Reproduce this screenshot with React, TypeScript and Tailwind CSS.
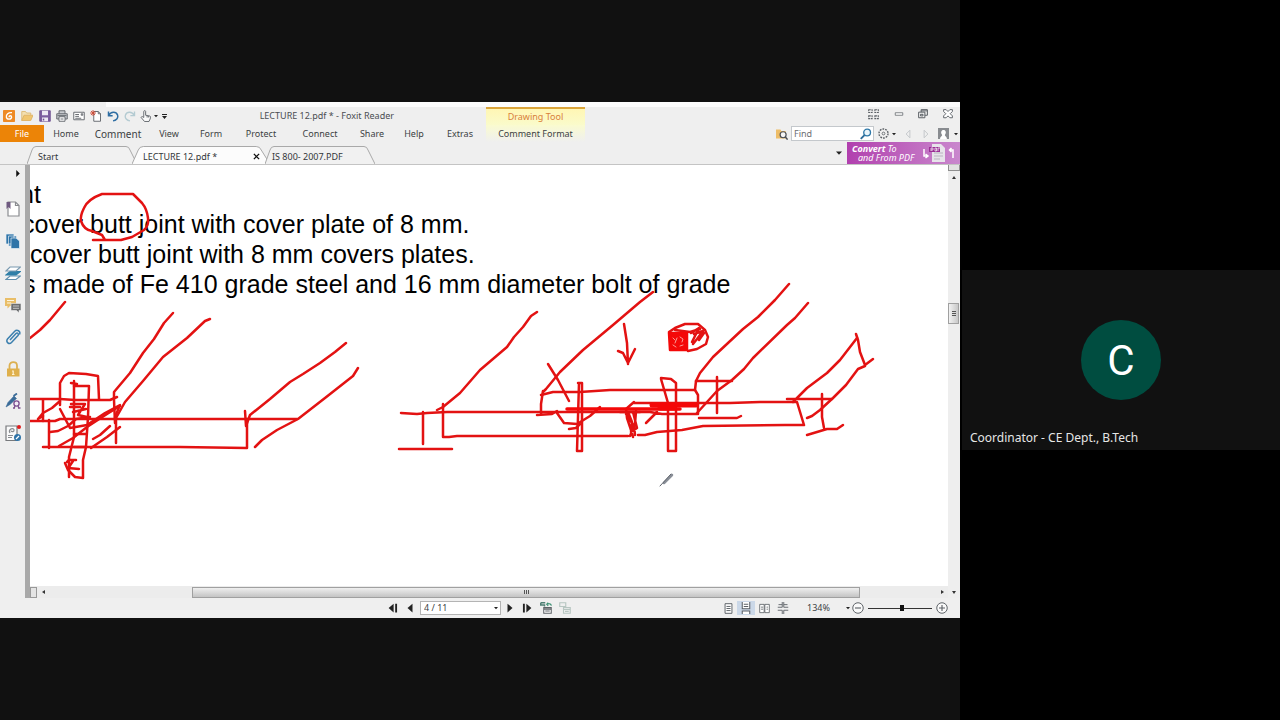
import type { ReactNode } from 'react'

const menus = [
  { label: 'Home', width: 'w-[44px]' },
  { label: 'Comment', width: 'w-[60px]', big: true },
  { label: 'View', width: 'w-[42px]' },
  { label: 'Form', width: 'w-[42px]' },
  { label: 'Protect', width: 'w-[58px]' },
  { label: 'Connect', width: 'w-[60px]' },
  { label: 'Share', width: 'w-[44px]' },
  { label: 'Help', width: 'w-[40px]' },
  { label: 'Extras', width: 'w-[52px]' },
]

// The page is scrolled sideways, so most lines start left of the viewport
const lines = [
  { text: 'nt', indent: '-ml-[10px]' },
  { text: 'cover butt joint with cover plate of 8 mm.', indent: '-ml-[8px]' },
  { text: 'cover butt joint with 8 mm covers plates.', indent: 'ml-0' },
  { text: 's made of Fe 410 grade steel and 16 mm diameter bolt of grade', indent: '-ml-[7px]' },
]

const strokes = [
  // circle round "butt"
  'M93 240H121L132 237L144 230Q149 226 148 218Q147 209 142 203L133 194H102Q88 199 84 208Q80 216 81 221Q84 230 92 231L102 235L105 240',
  // left joint
  'M30 338L40 330L50 320L65 302',
  'M173 313L164 323L154 339L143 353L130 373L114 392V400L115 423',
  'M210 319L205 321L187 338L163 357L143 381L125 402L116 418',
  'M346 343L335 352L320 363L303 374L290 382L270 399L250 415L246 426L245 411',
  'M358 368L353 376L325 398L298 419L277 430L262 440L255 447',
  'M30 399H60L75 400H110L117 397',
  'M30 421L55 421L60 419H297',
  'M43 447H180L247 448V419',
  'M49 420V448M43 400V421M116 418V443',
  'M60 405V383L64 376L69 373L86 374L98 376L99 399',
  'M71 383L77 384M74 381V437L69 457V477',
  'M74 386H89L88 417L86 447L83 460V478L75 477L68 470L65 463',
  'M67 462L69 460H76M68 468L79 469M69 467L73 461',
  'M38 419L43 413L52 408L60 401M38 419L43 416',
  'M60 409L70 428L87 425L105 413L120 405L115 417',
  'M50 432L58 431L68 426L76 419L90 417',
  'M59 446L73 438L87 427L107 414L120 406',
  'M93 439L100 435L110 426M91 448L107 437L120 427',
  'M71 404H85L78 415L87 417M73 412L86 409M74 434H86M74 447H86M70 407H80',
  // middle joint, left plate
  'M401 413L417 414L427 413L447 412H640',
  'M423 412V444M399 449L452 449',
  'M443 404V437H449L457 436H628',
  'M437 410L443 407L460 393L480 370L507 347L514 337L523 327L531 316L537 312',
  'M541 395L553 392H580L610 390H695',
  'M543 392L546 389L560 372L583 350L613 325L640 302L653 292',
  'M543 391L541 404V414M537 415L552 414L557 411',
  'M548 364L558 380L569 401',
  'M578 383H582V451H577L579 383',
  'M557 413L564 423L577 424L590 416L600 407M569 429L576 428L580 424',
  'M624 324L627 343L628 364M618 351L623 353L628 363L635 349',
  // scribble at the plate edge
  'M634 402L626 409L627 418L630 427L633 437M636 411L635 424L630 436M628 412L632 422L631 432L637 428L633 412M626 414L634 426L635 435',
  // right plate and second bolt
  'M634 403H730L760 402H797L804 425H785L703 426L682 430L657 432L645 435H638',
  'M661 378L671 379L676 383V451H668V403L661 379',
  'M696 381L695 390L698 395V414',
  'M620 412H650L662 414H697M646 423L657 412',
  'M789 284L775 300L758 317L743 329L713 357L700 373L696 381H732',
  'M808 303L795 318L787 325L753 358L744 369L732 380L717 391L697 413',
  'M717 377V413M699 418H737L741 416',
  'M787 399H832M793 402L807 388L827 373L840 360L857 338',
  'M856 334L858 340L860 352L865 365L873 359M865 366L858 369L846 385L833 398L820 410L812 416L807 418',
  'M822 394V417L824 428M807 435L827 429H837L843 425',
  // nut
  'M669 332L675 328L685 324H698L705 330L708 337L706 344L697 349L688 351',
  'M675 330L690 332L700 329M691 333L699 328L692 342M694 334L703 331L697 339L693 344M699 340L704 333',
]

function Icon({ children, className = 'size-4' }: { children: ReactNode; className?: string }) {
  return (
    <svg viewBox="0 0 16 16" className={className} fill="none" stroke="#5c6166" strokeWidth="1.2" aria-hidden="true">
      {children}
    </svg>
  )
}

function IconButton({ label, className = '', children }: { label: string; className?: string; children: ReactNode }) {
  return (
    <button type="button" aria-label={label} className={`flex shrink-0 items-center justify-center ${className}`}>
      {children}
    </button>
  )
}

function Caret({ className = 'size-[6px]' }: { className?: string }) {
  return (
    <svg viewBox="0 0 6 6" className={className} fill="#222" aria-hidden="true">
      <path d="M0 1.5H6L3 4.8Z" />
    </svg>
  )
}

function TitleBar() {
  return (
    <div className="flex h-[23px] flex-col">
      <div className="ml-[106px] h-[5px] shrink-0 bg-[#fcfcfc]" />
      <div className="flex flex-1">
        <div className="flex w-[486px] shrink-0 items-center">
          <IconButton label="Foxit" className="w-[18px]">
            <Icon className="size-3">
              <rect x="0" y="0" width="16" height="16" rx="1" fill="#ee8a25" stroke="none" />
              <path d="M12 3.5C7 3 4 6 4.500 9.500C5 13 11 13 11.500 9.500C11.500 7 8 7 8 9.500" stroke="#fff" strokeWidth="1.800" />
            </Icon>
          </IconButton>
          <IconButton label="Open" className="w-[18px]">
            <Icon className="size-3">
              <path d="M1 14V2H6L7.500 4H13V7" fill="#f3dfb0" stroke="#dcb973" />
              <path d="M1 14L4 7H16L13 14Z" fill="#f0c670" stroke="#dfb263" />
            </Icon>
          </IconButton>
          <IconButton label="Save" className="w-[18px]">
            <Icon className="size-3">
              <path d="M1 1H15V15H1Z" fill="#7d5ea0" stroke="#6b4f8f" />
              <path d="M4 1H12V7H4ZM4 10H12V15H4Z" fill="#eee9f4" stroke="none" />
              <path d="M6 11.500V14" stroke="#6b4f8f" strokeWidth="2" />
            </Icon>
          </IconButton>
          <IconButton label="Print" className="w-[16px]">
            <Icon className="size-3">
              <path d="M4 5V1H12V5M4 12H1V5H15V12H12" fill="#c9ccd0" />
              <path d="M4 9H12V15H4Z" fill="#fff" />
              <path d="M2 7.500H14M6 12H10" />
            </Icon>
          </IconButton>
          <IconButton label="Email" className="w-[17px]">
            <Icon className="size-3">
              <path d="M1 3H15V13H1Z" fill="#fff" />
              <path d="M3 6H8M3 8.500H8M3 11H11M11 5H13V7H11Z" />
            </Icon>
          </IconButton>
          <IconButton label="New" className="w-[17px]">
            <Icon className="size-3">
              <path d="M5 2H11L14 5V15H5Z" fill="#fff" />
              <path d="M11 2V5H14" />
              <path d="M4 0V8M0 4H8M1.300 1.300L6.700 6.700M6.700 1.300L1.300 6.700" stroke="#cf4a36" />
            </Icon>
          </IconButton>
          <IconButton label="Undo" className="w-[17px]">
            <Icon className="size-3">
              <path d="M2 2V7.500H7.500M2.500 7C5 2 12 1.500 14 6.500C15.500 11 12 14 8 14.500" stroke="#2f6ea3" strokeWidth="2" />
            </Icon>
          </IconButton>
          <IconButton label="Redo" className="w-[17px]">
            <Icon className="size-3">
              <path d="M14 2V7.500H8.500M13.500 7C11 2 4 1.500 2 6.500C.5 11 4 14 8 14.500" stroke="#b4cbd2" strokeWidth="1.800" />
            </Icon>
          </IconButton>
          <IconButton label="Hand tool" className="ml-[2px] w-[18px] gap-[2px]">
            <Icon className="size-3">
              <path d="M5 10V2C5 .5 7.500 .5 7.500 2V7L13 8C14.500 8.500 14 10 13.500 12L12 15.300H6L1.500 10C2 8 4 9 5 10ZM9.500 7.500V10M11.500 8V10" fill="#fafafa" />
            </Icon>
            <Caret className="size-[4px]" />
          </IconButton>
          <IconButton label="Customize" className="w-[12px]">
            <svg viewBox="0 0 6 6" className="size-[5px]" fill="#222" aria-hidden="true">
              <path d="M0 0H6V1.200H0ZM0 2.500H6L3 6Z" />
            </svg>
          </IconButton>
          <h1 className="mr-[92px] ml-auto text-[9px] leading-4 text-[#4a4d51]">LECTURE 12.pdf * - Foxit Reader</h1>
        </div>
        <div className="w-[99px] shrink-0 border-t-2 border-[#dba53a] bg-gradient-to-b from-[#fff6b4] to-[#fafbcb] text-center text-[9px] leading-4 text-[#d9803a]">
          Drawing Tool
        </div>
        <div className="ml-auto flex items-center pb-1">
          <IconButton label="Full screen" className="w-[25px]">
            <Icon className="size-[11px]">
              <path d="M1 1H6V5H1ZM10 1H15V5H10ZM1 10H6V14H1ZM10 10H15V14H10Z" strokeDasharray="3 1" strokeWidth="1.500" />
            </Icon>
          </IconButton>
          <IconButton label="Minimize" className="w-[25px]">
            <Icon className="size-[10px]">
              <path d="M2 6H14V10H2Z" fill="#fff" />
            </Icon>
          </IconButton>
          <IconButton label="Restore" className="w-[24px]">
            <Icon className="size-[10px]">
              <path d="M5 5V1H15V10H11M1 5H11V14H1ZM4 8.500H8V11H4ZM5 3H15" strokeWidth="1.600" />
            </Icon>
          </IconButton>
          <IconButton label="Close" className="w-[25px]">
            <Icon className="size-[10px]">
              <path d="M1 1H5L8 4L11 1H15V4L11.500 7.500L15 11V14H11L8 11L5 14H1V11L4.500 7.500L1 4Z" fill="#fff" strokeWidth="1.500" />
            </Icon>
          </IconButton>
        </div>
      </div>
    </div>
  )
}

function MenuBar() {
  return (
    <div className="flex h-[17px] items-stretch text-[9px] leading-4 text-[#3c3f43]">
      <button type="button" className="w-[44px] bg-[#ec8407] text-white">File</button>
      {menus.map((m) => (
        <button key={m.label} type="button" className={`${m.width} ${m.big ? 'text-[10px]' : ''} shrink-0 pt-px`}>
          {m.label}
        </button>
      ))}
      <button type="button" className="w-[99px] shrink-0 bg-gradient-to-b from-[#fafbcf] to-[#efefef] pt-px">
        Comment Format
      </button>
      <div className="ml-auto flex items-center">
        <Icon className="mr-[3px] size-3">
          <path d="M0 2H6L7 4H13V14H0Z" fill="#edbd68" stroke="none" />
          <circle cx="9.500" cy="9" r="4" fill="#f6f6f6" stroke="#4b4f55" strokeWidth="1.600" />
          <path d="M12.500 12L15.500 15.500" stroke="#4b4f55" strokeWidth="2" />
        </Icon>
        <label className="flex h-[15px] items-center border border-[#c4c8cc] bg-white pr-[1px]">
          <input type="text" aria-label="Find" placeholder="Find" className="w-[68px] bg-transparent pl-[2px] text-[9px] leading-3 outline-none placeholder:text-[#6b6e72]" />
          <Icon className="size-3">
            <circle cx="9.500" cy="6" r="4.500" fill="#eaf5fb" stroke="#2e78a8" strokeWidth="1.800" />
            <path d="M6 9.500L1 14.500" stroke="#2e6c99" strokeWidth="2.600" />
          </Icon>
        </label>
        <IconButton label="Search settings" className="w-[25px] gap-[3px]">
          <Icon className="size-[11px]">
            <circle cx="8" cy="8" r="6.600" strokeDasharray="2.600 1.500" strokeWidth="2" />
            <circle cx="8" cy="8" r="2" />
          </Icon>
          <Caret className="size-[4px]" />
        </IconButton>
        <IconButton label="Previous result" className="w-[17px]">
          <Icon className="size-[10px]">
            <path d="M11 2V14L5 8Z" stroke="#b8bcc0" />
          </Icon>
        </IconButton>
        <IconButton label="Next result" className="w-[19px]">
          <Icon className="size-[10px]">
            <path d="M5 2V14L11 8Z" stroke="#b8bcc0" />
          </Icon>
        </IconButton>
        <IconButton label="Account" className="w-[25px] gap-[5px]">
          <Icon className="size-[11px]">
            <path d="M0 0H16V16H0Z" fill="#898c90" stroke="none" />
            <path d="M3 16C3 12 6 12 6 10C3.500 7 4.500 3 8 3S12.500 7 10 10C10 12 13 12 13 16Z" fill="#fff" stroke="none" />
          </Icon>
          <Caret className="size-[4px]" />
        </IconButton>
      </div>
    </div>
  )
}

function DocTab({ label, active, className }: { label: string; active?: boolean; className: string }) {
  return (
    <div className={`relative -mr-[5px] flex h-[18px] shrink-0 items-center pt-[3px] ${className}`}>
      <svg viewBox="0 0 110 18" preserveAspectRatio="none" className="absolute inset-0 size-full" aria-hidden="true">
        <path
          d="M0 18L5 4Q6 .5 9 .5H99Q102 .5 103 4L110 18"
          fill={active ? '#fcfcfc' : '#f1f1f1'}
          stroke="#a9a9a9"
          vectorEffect="non-scaling-stroke"
        />
      </svg>
      <button type="button" className="relative text-[9px] leading-4 text-[#33363a]">{label}</button>
      {active && (
        <button type="button" aria-label={`Close ${label}`} className="relative mr-[10px] ml-auto">
          <Icon className="size-[7px]">
            <path d="M2 2L14 14M14 2L2 14" stroke="#111" strokeWidth="3" />
          </Icon>
        </button>
      )}
    </div>
  )
}

function TabStrip() {
  return (
    <div className="flex h-[23px] items-end border-b border-[#c4c4c4]">
      <div className="flex pl-[27px]">
        <DocTab label="Start" className="w-[110px] pl-[11px]" />
        <DocTab label="LECTURE 12.pdf *" active className="w-[138px] pl-[11px]" />
        <DocTab label="IS 800- 2007.PDF" className="w-[110px] pl-[7px]" />
      </div>
      <div className="ml-auto flex h-[22px] items-center">
        <IconButton label="Tab list" className="w-[16px]">
          <Caret />
        </IconButton>
        <a href="#convert" className="flex h-[22px] w-[113px] items-center justify-between bg-gradient-to-r from-[#b13fae] to-[#c987cd] pr-1 pl-[5px] text-white italic">
          <span className="flex flex-col text-[9px] leading-[9px]">
            <span><b>Convert</b> To</span>
            <span className="pl-[6px]">and From PDF</span>
          </span>
          <svg viewBox="0 0 34 20" className="h-5 w-[34px]" fill="none" aria-hidden="true">
            <path d="M2 6V13H5M3.500 11L6 13L3.500 15" stroke="#fff" strokeWidth="1.500" />
            <path d="M10 1H19L23 5V19H10Z" fill="#e7e4ea" />
            <path d="M12 10H21M12 13H21M12 16H18" stroke="#b9b4c0" />
            <path d="M7 4H18V9H7Z" fill="#9a2f95" />
            <path d="M9 8V5H11V7H9M13 5V8H14.500V5ZM16 8V5H18" stroke="#fff" strokeWidth=".7" />
            <path d="M31 15V7H28M29.500 5L27.500 7L29.500 9" stroke="#fff" strokeWidth="1.500" />
          </svg>
        </a>
      </div>
    </div>
  )
}

function SidePanel() {
  return (
    <nav aria-label="Panels" className="flex w-[25px] shrink-0 flex-col items-center gap-4 bg-[#efefef] pt-[2px]">
      <IconButton label="Expand panel" className="-mb-1 h-3 w-full pl-[11px]">
        <svg viewBox="0 0 4 8" className="h-[7px] w-1" fill="#111" aria-hidden="true">
          <path d="M0 0L4 4L0 8Z" />
        </svg>
      </IconButton>
      <IconButton label="Bookmarks" className="mt-[10px]">
        <Icon>
          <path d="M3 1H10.500L14 4.500V15H3Z" fill="#fff" stroke="#8a8c90" />
          <path d="M10.500 1V4.500H14" stroke="#8a8c90" />
          <path d="M1.500 1H5.500V8L3.500 6L1.500 8Z" fill="#6f5a80" stroke="none" />
        </Icon>
      </IconButton>
      <IconButton label="Pages">
        <Icon>
          <path d="M1 1H9V11H1ZM3.500 3H11.500V13H3.500Z" fill="#2f74a8" stroke="#e8f0f6" strokeWidth=".7" />
          <path d="M6 5H11L14.500 8V15.500H6Z" fill="#2f74a8" stroke="#e8f0f6" strokeWidth=".7" />
        </Icon>
      </IconButton>
      <IconButton label="Layers">
        <Icon>
          <path d="M1 14.500L5 11H15.500L11 14.500Z" fill="#fff" stroke="#5f8fae" />
          <path d="M1 10L5 6.500H15.500L11 10Z" fill="#2f7fa8" stroke="#2f7fa8" />
          <path d="M1 6L5 2H15.500L11 6Z" fill="#fff" stroke="#7a9ab0" />
        </Icon>
      </IconButton>
      <IconButton label="Comments">
        <Icon>
          <path d="M0 1H11V9H5L2.500 11.500V9H0Z" fill="#e9be68" stroke="none" />
          <path d="M6 6.500H16V13.500H14V16L11.500 13.500H6Z" fill="#6c6e70" stroke="#efefef" strokeWidth=".6" />
          <path d="M2 3.500H9M2 6H6" stroke="#fff6dd" />
          <path d="M8 9H14M8 11.300H14" stroke="#cfcfcf" strokeWidth=".9" />
        </Icon>
      </IconButton>
      <IconButton label="Attachments">
        <Icon>
          <path d="M5 11L11 4.500C12.500 3 14 5 13 6.500L6.500 13.500C4 16 .5 13 2.500 10L9.500 2.500C12 0 16 2 14.500 5.500" stroke="#3b7fae" strokeWidth="1.500" />
        </Icon>
      </IconButton>
      <IconButton label="Security">
        <Icon>
          <path d="M4.500 8V4.500C4.500 0 12 0 12 4.500V8" stroke="#dcb050" strokeWidth="1.800" />
          <path d="M2 7.500H14.500V15.500H2Z" fill="#dfb04c" stroke="none" />
          <path d="M8.200 9.500V13.500M7 10H8.500M7 13.500H9.500" stroke="#fff3d4" />
        </Icon>
      </IconButton>
      <IconButton label="Signatures">
        <Icon>
          <path d="M1 14L3 9.500L9 3L11.500 5.500L5 11.500Z" fill="#3a6b98" stroke="#3a6b98" strokeWidth=".6" />
          <path d="M8.500 3L12 .5" stroke="#3a6b98" strokeWidth="1.800" />
          <circle cx="11.500" cy="10.500" r="2.600" fill="#f2eaf5" stroke="#7c4f90" strokeWidth="1.300" />
          <path d="M9 15.500L10 13M14 15.500L13 13M8 15H10M13 15H15.500" stroke="#7c4f90" strokeWidth="1.300" />
        </Icon>
      </IconButton>
      <IconButton label="Digital IDs">
        <Icon>
          <path d="M1 1H12V15.500H1Z" fill="#fafafa" stroke="#77797c" />
          <path d="M5 8C3 5 7 2 9 4.500C9.500 7 7 7 6 6M3 10.500H8M3 12.500H7" stroke="#888b8f" />
          <circle cx="12.500" cy="12.500" r="3.500" fill="#2f74a8" stroke="none" />
          <path d="M11 14L14 11" stroke="#fff" />
          <circle cx="14" cy="2" r="2" fill="#e01b1b" stroke="none" />
        </Icon>
      </IconButton>
    </nav>
  )
}

function DocumentView() {
  return (
    <main className="relative h-[421px] overflow-hidden bg-white pt-[14px] text-[25px] leading-[30px] whitespace-nowrap text-black">
      {lines.map((line) => (
        <p key={line.text} className={`${line.indent} font-['Liberation_Sans',Arial,sans-serif]`}>{line.text}</p>
      ))}
      <svg
        viewBox="30 165 918 421"
        width="918"
        height="421"
        className="absolute top-0 left-0"
        fill="none"
        stroke="#e31212"
        strokeWidth="2.5"
        strokeLinecap="round"
        strokeLinejoin="round"
        aria-label="Ink annotations"
      >
        {strokes.map((d) => (
          <path key={d} d={d} />
        ))}
        <g stroke="#f40808">
          <path d="M567 409H640L680 409" strokeWidth="3.500" />
          <path d="M652 405L696 405" strokeWidth="5" />
          <path d="M660 408H674" strokeWidth="5" />
          <path d="M669 333L687 333V350L670 350Z" fill="#f40808" />
        </g>
        <path d="M673 338L675 340M677 338L675 343M680 337L683 339L682 342M673 345L676 347M680 346L683 345" stroke="#fac0ba" strokeWidth=".8" />
        {/* pencil cursor */}
        <path d="M672 475L664 483" stroke="#8a8f98" strokeWidth="2.500" />
        <path d="M671 474L660 486" stroke="#5f646c" strokeWidth="1" />
      </svg>
    </main>
  )
}

function HorizontalScroll() {
  return (
    <div className="flex h-3 items-center bg-[#ececec]">
      <div className="h-[11px] w-[7px] border border-[#999] bg-[#e4e4e4]" />
      <IconButton label="Scroll left" className="w-[12px]">
        <svg viewBox="0 0 3 4" className="h-1 w-[3px]" fill="#333" aria-hidden="true"><path d="M3 0V4L0 2Z" /></svg>
      </IconButton>
      <div className="flex flex-1 pr-[76px] pl-[143px]">
        <div className="flex h-[11px] flex-1 items-center justify-center gap-px border border-[#a0a0a0] bg-gradient-to-b from-[#efefef] to-[#c4c4c4]">
          <span className="h-1 w-px bg-[#555]" />
          <span className="h-1 w-px bg-[#555]" />
          <span className="h-1 w-px bg-[#555]" />
        </div>
      </div>
      <IconButton label="Scroll right" className="w-[12px]">
        <svg viewBox="0 0 3 4" className="h-1 w-[3px]" fill="#333" aria-hidden="true"><path d="M0 0V4L3 2Z" /></svg>
      </IconButton>
    </div>
  )
}

function VerticalScroll() {
  return (
    <div className="flex w-3 shrink-0 flex-col items-center bg-[#eeeeee]">
      <div className="h-[6px] w-full border border-t-0 border-[#8f8f8f] bg-[#e2e2e2]" />
      <IconButton label="Scroll up" className="h-3">
        <svg viewBox="0 0 4 3" className="h-[3px] w-1" fill="#333" aria-hidden="true"><path d="M0 3H4L2 0Z" /></svg>
      </IconButton>
      <div className="flex w-full flex-1 flex-col pt-[120px] pr-px">
        <div className="flex h-[21px] flex-col items-center justify-center gap-px border border-[#a0a0a0] bg-gradient-to-r from-[#f2f2f2] to-[#c8c8c8]">
          <span className="h-px w-1 bg-[#555]" />
          <span className="h-px w-1 bg-[#555]" />
          <span className="h-px w-1 bg-[#555]" />
        </div>
      </div>
      <IconButton label="Scroll down" className="h-3">
        <svg viewBox="0 0 4 3" className="h-[3px] w-1" fill="#333" aria-hidden="true"><path d="M0 0H4L2 3Z" /></svg>
      </IconButton>
    </div>
  )
}

function StatusBar() {
  return (
    <footer className="flex h-[20px] items-center text-[9px] text-[#3c3f43]">
      <div className="flex items-center pl-[384px]">
        <IconButton label="First page" className="w-[17px]">
          <Icon className="size-[10px]"><path d="M9 1V15L1 8ZM11.500 1H14.500V15H11.500Z" fill="#222" stroke="none" /></Icon>
        </IconButton>
        <IconButton label="Previous page" className="w-[17px]">
          <Icon className="size-[10px]"><path d="M12 1V15L4 8Z" fill="#222" stroke="none" /></Icon>
        </IconButton>
        <div className="relative ml-[2px]">
          <select aria-label="Page" className="block h-[14px] w-[81px] appearance-none border border-[#b4b4b4] bg-white pl-[3px] text-[9px] leading-3">
            <option>4 / 11</option>
          </select>
          <Caret className="pointer-events-none absolute top-[5px] right-[3px] size-[4px]" />
        </div>
        <IconButton label="Next page" className="w-[17px]">
          <Icon className="size-[10px]"><path d="M4 1V15L12 8Z" fill="#222" stroke="none" /></Icon>
        </IconButton>
        <IconButton label="Last page" className="w-[18px]">
          <Icon className="size-[10px]"><path d="M7 1V15L15 8ZM1.500 1H4.500V15H1.500Z" fill="#222" stroke="none" /></Icon>
        </IconButton>
        <IconButton label="Previous view" className="w-[19px]">
          <Icon className="size-3">
            <path d="M1 1H7M1 4H6V6M1 1V5" strokeWidth="2" stroke="#4f7f74" />
            <path d="M15 5C15 2 12 2 9 3M11 1L9 3L11 5" stroke="#3d9274" strokeWidth="1.500" />
            <path d="M5 7.500H15V15H5ZM5 9.500H15M7 12H13" fill="#fff" strokeWidth="1.400" />
          </Icon>
        </IconButton>
        <IconButton label="Next view" className="w-[19px]">
          <Icon className="size-3">
            <path d="M1 1H9V6H1ZM6 7.500H15V15H6ZM6 10H15M8 12.500H13" stroke="#b7c6c1" strokeWidth="1.500" />
          </Icon>
        </IconButton>
      </div>
      <div className="ml-auto flex items-center">
        <IconButton label="Single page" className="w-[18px]">
          <Icon className="size-[11px]"><path d="M3 1H13V15H3ZM5 5H11M5 8H11M5 11H11" fill="#fff" strokeWidth="1.400" /></Icon>
        </IconButton>
        <IconButton label="Continuous" className="h-[14px] w-[18px] bg-[#cbd8e8]">
          <Icon className="size-[12px]"><path d="M3 0V9H13V0M5 3H11M5 6H11M3 16V12H13V16" fill="#fff" strokeWidth="1.400" /></Icon>
        </IconButton>
        <IconButton label="Facing" className="w-[18px]">
          <Icon className="size-[11px]"><path d="M1 2H7.500V14H1ZM8.500 2H15V14H8.500ZM3 6H6M3 9H6M11 6H13M11 9H13" fill="#fff" /></Icon>
        </IconButton>
        <IconButton label="Continuous facing" className="w-[20px]">
          <Icon className="size-[12px]"><path d="M7 0V7H1M9 0V7H15M2 3.500H7M9 3.500H14M1 11H7V16M15 11H9V16" /></Icon>
        </IconButton>
        <button type="button" className="ml-[14px] flex w-[43px] items-center justify-between leading-4">
          134%
          <Caret className="size-[4px]" />
        </button>
        <IconButton label="Zoom out" className="ml-[2px]">
          <Icon className="size-[12px]"><circle cx="8" cy="8" r="7" fill="#fafafa" strokeWidth="1.300" /><path d="M4 8H12" strokeWidth="1.500" /></Icon>
        </IconButton>
        <input
          type="range"
          aria-label="Zoom"
          min={0}
          max={100}
          defaultValue={53}
          className="mx-[4px] h-[7px] w-[64px] appearance-none bg-[linear-gradient(#333,#333)] bg-[length:100%_1px] bg-center bg-no-repeat [&::-webkit-slider-thumb]:h-[6px] [&::-webkit-slider-thumb]:w-1 [&::-webkit-slider-thumb]:appearance-none [&::-webkit-slider-thumb]:bg-[#111]"
        />
        <IconButton label="Zoom in" className="mr-[12px]">
          <Icon className="size-[12px]"><circle cx="8" cy="8" r="7" fill="#fafafa" strokeWidth="1.300" /><path d="M4 8H12M8 4V12" strokeWidth="1.500" /></Icon>
        </IconButton>
      </div>
    </footer>
  )
}

export default function App() {
  return (
    <div className="flex min-h-screen bg-black font-['Noto_Sans','Open_Sans',sans-serif]">
      <section className="flex w-3/4 flex-col justify-center bg-[#111111]">
        <div className="bg-[#efefef]">
          <header>
            <TitleBar />
            <MenuBar />
            <TabStrip />
          </header>
          <div className="flex">
            <SidePanel />
            <div className="w-[5px] shrink-0 bg-[#a9a9a9]" />
            <div className="min-w-0 flex-1">
              <DocumentView />
              <HorizontalScroll />
            </div>
            <VerticalScroll />
          </div>
          <StatusBar />
        </div>
      </section>
      <aside className="flex w-1/4 flex-col justify-center pl-[2px]">
        <div className="grid h-[180px] grid-rows-[1fr_80px_1fr] justify-items-center bg-[#111111]">
          <div className="row-start-2 flex size-20 items-center justify-center rounded-full bg-[#004d40] pt-[2px] font-[Roboto,sans-serif] text-[42px] leading-none text-white">
            C
          </div>
          <p className="row-start-3 self-end justify-self-start pb-1 pl-2 text-[12px] leading-4 text-[#e6e6e6]">
            Coordinator - CE Dept., B.Tech
          </p>
        </div>
      </aside>
    </div>
  )
}
